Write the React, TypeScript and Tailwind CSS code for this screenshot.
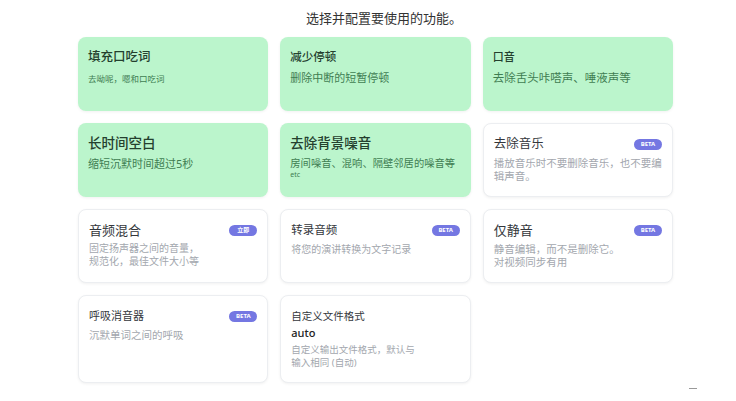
import React from "react";

type Card = {
  title: string;
  titleSize: string;
  desc: string[];
  descSize: string;
  green?: boolean;
  badge?: string;
  extra?: string;
  value?: string;
  tall?: boolean;
  gap?: string;
};

const cards: Card[] = [
  { title: "填充口吃词", titleSize: "text-[12.5px]", desc: ["去呦呢，嗯和口吃词"], descSize: "text-[8.5px]", green: true, gap: "mt-[5px]" },
  { title: "减少停顿", titleSize: "text-[11.5px]", desc: ["删除中断的短暂停顿"], descSize: "text-[11px]", green: true, gap: "mt-[4px]" },
  { title: "口音", titleSize: "text-[11px]", desc: ["去除舌头咔嗒声、唾液声等"], descSize: "text-[11.5px]", green: true, gap: "mt-[4px]" },
  { title: "长时间空白", titleSize: "text-[13.5px]", desc: ["缩短沉默时间超过5秒"], descSize: "text-[11px]", green: true, gap: "mt-[4px]" },
  { title: "去除背景噪音", titleSize: "text-[13.5px]", desc: ["房间噪音、混响、隔壁邻居的噪音等"], descSize: "text-[10.3px]", green: true, extra: "etc", gap: "mt-[4px]" },
  { title: "去除音乐", titleSize: "text-[12.5px]", desc: ["播放音乐时不要删除音乐，也不要编", "辑声音。"], descSize: "text-[10.5px]", badge: "BETA", gap: "mt-[3px]" },
  { title: "音频混合", titleSize: "text-[13px]", desc: ["固定扬声器之间的音量，", "规范化，最佳文件大小等"], descSize: "text-[10px]", badge: "立即", gap: "mt-[2px]" },
  { title: "转录音频", titleSize: "text-[11.5px]", desc: ["将您的演讲转换为文字记录"], descSize: "text-[10px]", badge: "BETA", gap: "mt-[3px]" },
  { title: "仅静音", titleSize: "text-[13px]", desc: ["静音编辑，而不是删除它。", "对视频同步有用"], descSize: "text-[10.5px]", badge: "BETA", gap: "mt-[3px]" },
  { title: "呼吸消音器", titleSize: "text-[11px]", desc: ["沉默单词之间的呼吸"], descSize: "text-[10.5px]", badge: "BETA", tall: true, gap: "mt-[3px]" },
  { title: "自定义文件格式", titleSize: "text-[10.5px]", desc: ["自定义输出文件格式，默认与", "输入相同 (自动)"], descSize: "text-[9.5px]", value: "auto", tall: true, gap: "mt-[4px]" },
];

function Badge({ text }: { text: string }) {
  return (
    <span className="flex h-[11px] w-[28px] shrink-0 items-center justify-center rounded-full bg-[#7477e2] text-[6px] font-bold leading-none text-white">
      {text}
    </span>
  );
}

function CardView({ c }: { c: Card }) {
  const base = c.green
    ? "bg-[#bbf5cc] shadow-[0_1px_3px_rgba(0,0,0,0.06)]"
    : "bg-white border border-[#eceef1] shadow-[0_1px_3px_rgba(0,0,0,0.06)]";
  return (
    <div className={`${base} rounded-[8px] px-[10px] pt-[10px] ${c.tall ? "h-[88px]" : "h-[74px]"}`}>
      <div className="flex items-center justify-between">
        <div className={`${c.titleSize} leading-[20px] ${c.green ? "font-medium text-[#24402e]" : "font-normal text-[#34373c]"}`}>
          {c.title}
        </div>
        {c.badge && <Badge text={c.badge} />}
      </div>
      {c.value && <div className="text-[11px] leading-[14px] font-medium text-[#222]">{c.value}</div>}
      <div className={`${c.gap} ${c.descSize} ${c.value ? "leading-[12.5px]" : "leading-[13px]"} ${c.green ? "text-[#3f7d52]" : "text-[#a3a7ae]"}`}>
        {c.desc.map((d, i) => (
          <div key={i}>{d}</div>
        ))}
      </div>
      {c.extra && <div className="text-[7px] leading-[9px] text-[#3f7d52]">{c.extra}</div>}
    </div>
  );
}

export default function App() {
  return (
    <div
      className="relative h-[401px] w-[736px] overflow-hidden bg-white"
      style={{ fontFamily: '"Noto Sans", "Noto Sans CJK SC", sans-serif' }}
    >
      <div className="pl-[32px] pt-[8px] text-center text-[13px] leading-[20px] text-[#333]">选择并配置要使用的功能。</div>
      <div className="ml-[78px] mt-[9px] grid w-[595px] grid-cols-3 items-start gap-x-[12px] gap-y-[12px]">
        {cards.map((c, i) => (
          <CardView key={i} c={c} />
        ))}
      </div>
      <div className="absolute left-[689px] top-[388px] h-[1px] w-[8px] bg-[#999]" />
    </div>
  );
}
